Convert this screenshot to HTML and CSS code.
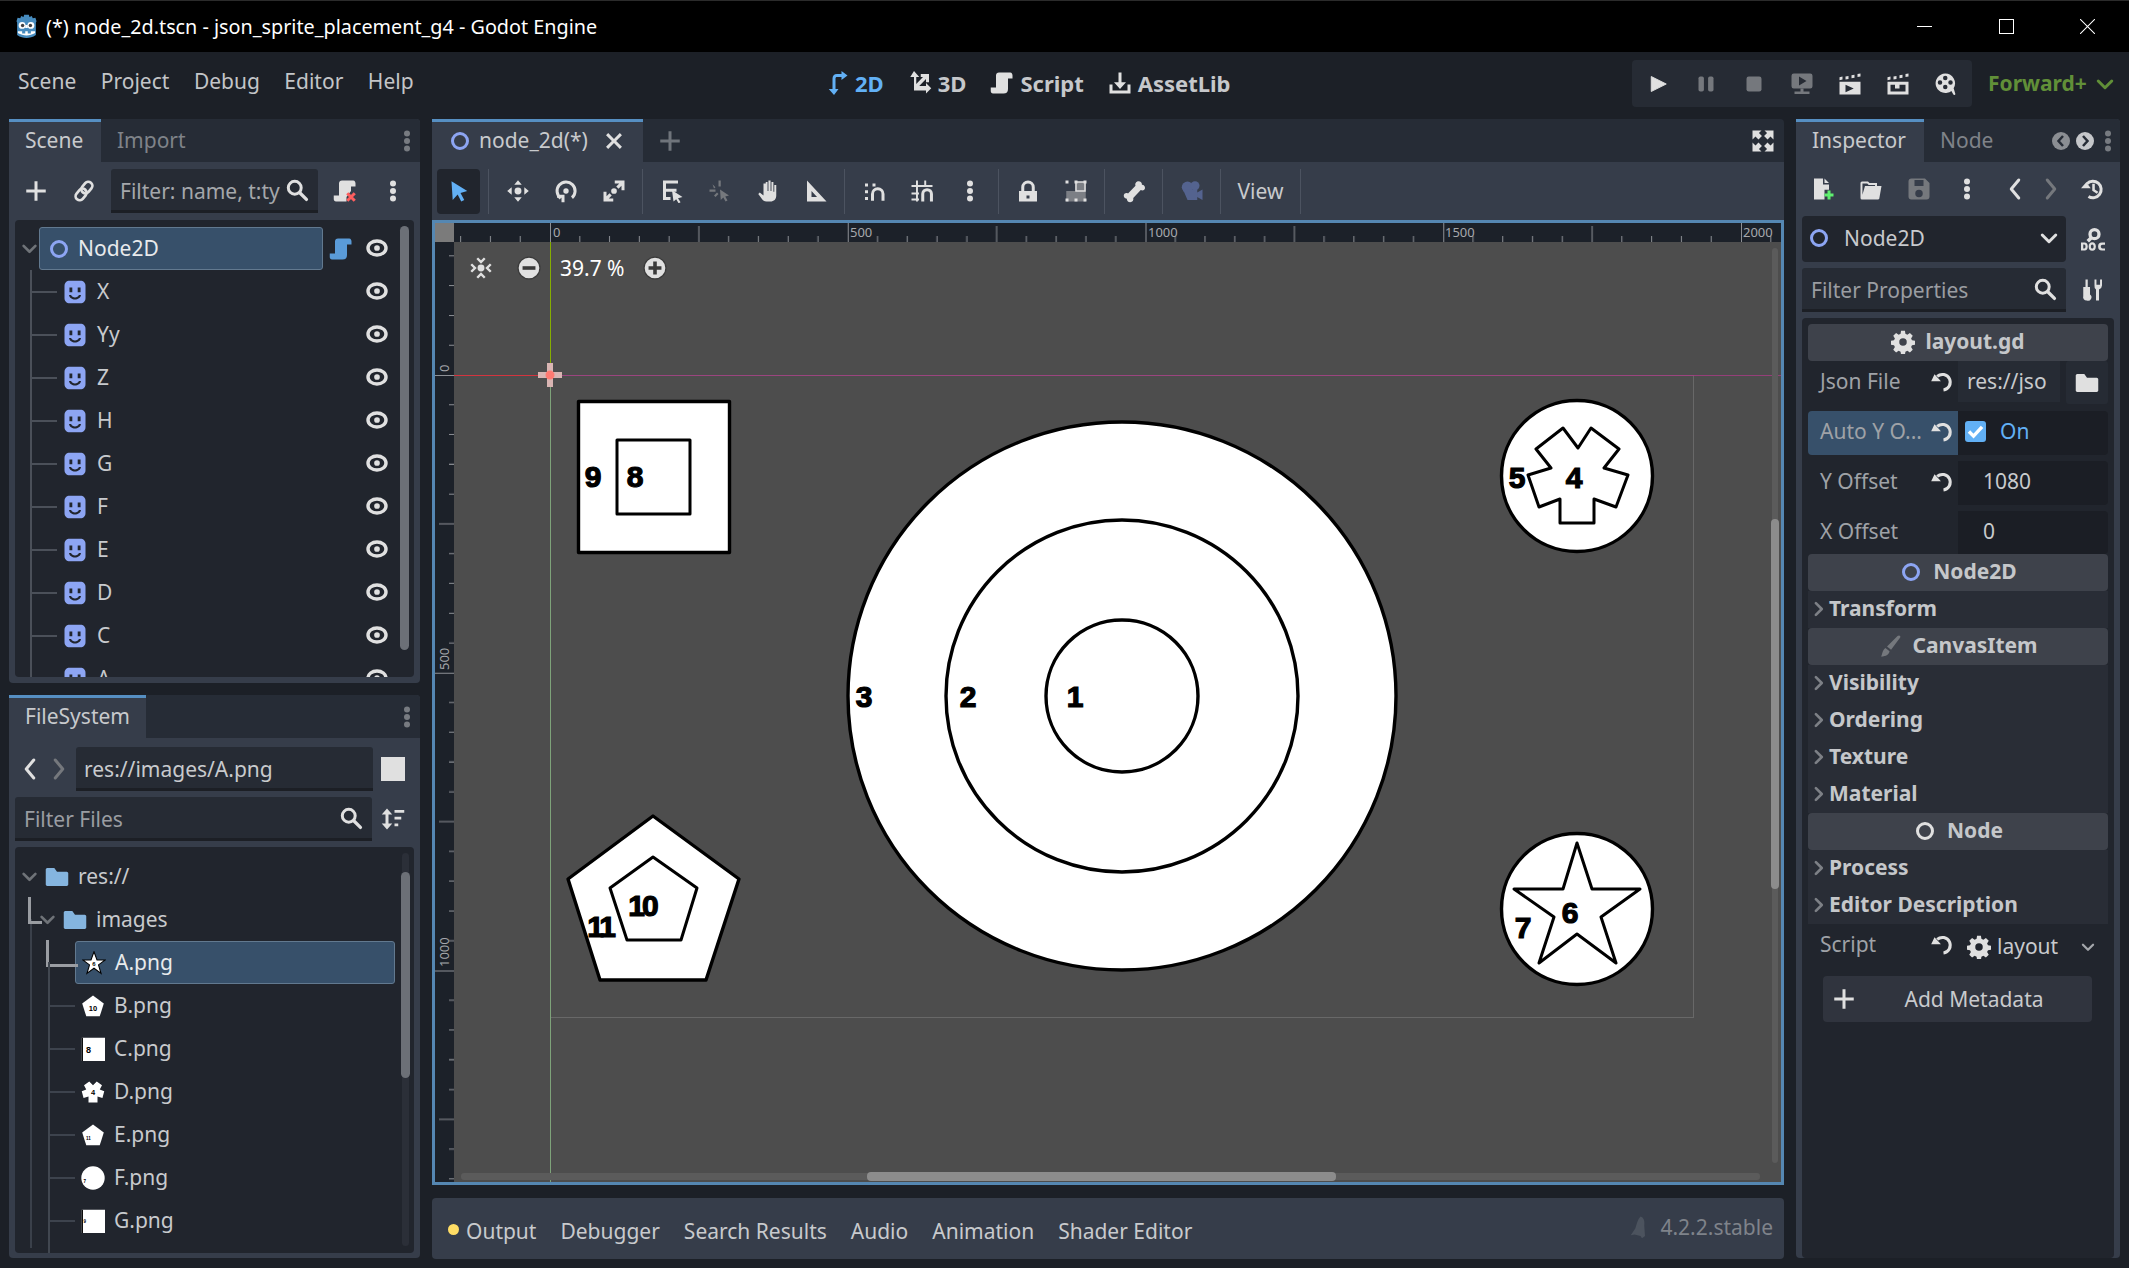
FILE: index.html
```html
<!DOCTYPE html>
<html lang="en">
<head>
  <meta charset="UTF-8">
  <title>(*) node_2d.tscn - json_sprite_placement_g4 - Godot Engine</title>
  <link rel="stylesheet" href="styles.css">
</head>
<body>
  <!-- icon sheet -->
  <svg class="defs">
    <symbol id="i-eye" viewBox="0 0 16 16"><ellipse cx="8" cy="8" rx="6" ry="4.700" fill="none" stroke="currentColor" stroke-width="2.300"/><circle cx="8" cy="8" r="1.900"/></symbol>
    <symbol id="i-node" viewBox="0 0 16 16"><circle cx="8" cy="8" r="5" fill="none" stroke="currentColor" stroke-width="2"/></symbol>
    <symbol id="i-sprite" viewBox="0 0 16 16"><path fill="#8da5f3" d="M4.500 .5h7c2.200 0 3.500 1.300 3.500 3.500v8c0 2.200-1.300 3.500-3.500 3.500h-7C2.300 15.500 1 14.200 1 12V4C1 1.800 2.300.5 4.500.5z"/><path fill="#21252d" d="M4.300 5h1.900v3.200H4.300zM9.800 5h1.900v3.200H9.800zM4 10h1.400c.3 1 1.500 1.600 2.600 1.600s2.300-.6 2.600-1.600H12c-.3 1.900-2.100 3-4 3s-3.700-1.100-4-3z"/></symbol>
    <symbol id="i-down" viewBox="0 0 16 16"><path fill="none" stroke="currentColor" stroke-width="2" stroke-linecap="round" stroke-linejoin="round" d="M3.500 6 8 10.500 12.500 6"/></symbol>
    <symbol id="i-right" viewBox="0 0 16 16"><path fill="none" stroke="currentColor" stroke-width="2" stroke-linecap="round" stroke-linejoin="round" d="M6 3.500 10.500 8 6 12.500"/></symbol>
    <symbol id="i-search" viewBox="0 0 16 16"><circle cx="6.500" cy="6.500" r="4.300" fill="none" stroke="currentColor" stroke-width="2"/><path stroke="currentColor" stroke-width="2.200" stroke-linecap="round" d="m10 10 4.300 4.300"/></symbol>
    <symbol id="i-dots" viewBox="0 0 16 16"><circle cx="8" cy="3" r="2"/><circle cx="8" cy="8" r="2"/><circle cx="8" cy="13" r="2"/></symbol>
    <symbol id="i-plus" viewBox="0 0 16 16"><path d="M7 1.500h2V7h5.500v2H9v5.500H7V9H1.500V7H7z"/></symbol>
    <symbol id="i-link" viewBox="0 0 16 16"><g transform="rotate(-50 8 8)" fill="none" stroke="currentColor" stroke-width="1.800"><rect x=".8" y="5.300" width="8.400" height="5.400" rx="2.700"/><rect x="6.800" y="5.300" width="8.400" height="5.400" rx="2.700"/></g></symbol>
    <symbol id="i-script" viewBox="0 0 16 16"><path d="M6 1h7.500c1 0 1.500 1 1.500 2v2h-3v7c0 2-1 3-3 3H2c-1 0-1.500-.7-1.500-1.700V11H4V3c0-1.200.8-2 2-2z"/></symbol>
    <symbol id="i-scriptx" viewBox="0 0 16 16"><path fill="#e0e0e0" d="M6 1h7.500c1 0 1.500 1 1.500 2v2h-3v3L9 12v3H2c-1 0-1.500-.7-1.500-1.700V11H4V3c0-1.200.8-2 2-2z"/><path stroke="#ff5f5f" stroke-width="2" d="m9.500 9.500 5 5m0-5-5 5"/></symbol>
    <symbol id="i-select" viewBox="0 0 16 16"><path d="M3 1.500 13.500 8 9 9.300l2.500 4.700-2 1-2.400-4.700L3.800 14z"/></symbol>
    <symbol id="i-move" viewBox="0 0 16 16"><circle cx="8" cy="8" r="2.300"/><path d="M8 .8 10.500 3.800H5.500zM8 15.200 5.500 12.200h5zM.8 8 3.800 5.500v5zM15.200 8 12.200 10.500v-5z"/></symbol>
    <symbol id="i-rotate" viewBox="0 0 16 16"><circle cx="8" cy="8" r="1.800"/><path fill="none" stroke="currentColor" stroke-width="2" d="M4.500 12.800a6 6 0 1 1 7.500-.3"/><path d="M2 10.500h5v5H5v-3H2z"/></symbol>
    <symbol id="i-scale" viewBox="0 0 16 16"><circle cx="8" cy="8" r="1.900"/><path d="M8.500 1H15v6.500h-2V4.500l-2 2L9.500 5l2-2h-3zM1 8.500h2v3l2-2L6.500 11l-2 2h3v2H1z"/></symbol>
    <symbol id="i-list" viewBox="0 0 16 16"><path d="M2 1h10v2H4v3.500h7v2H4V12h3v2H2z"/><path d="M8 7.500 15 12l-3 .8 1.700 2.700-1.300.7-1.600-2.700L9 15z"/></symbol>
    <symbol id="i-smart" viewBox="0 0 16 16"><path d="M7 1h1.500v4H7zM1 7h4v1.500H1zM3 3.500 5 5.500l-1 .8zM5 12l-1-1 2-2 1 1z"/><path d="M8 7 14 11l-2.500.6L13 14.300l-1.300.7-1.500-2.700L8.500 14z"/></symbol>
    <symbol id="i-hand" viewBox="0 0 16 16"><path d="M6.500 2h1.200v6h.6V1h1.400v7h.6V2h1.300v6.500h.6V4h1.300v7c0 2.500-1.500 4-4 4H7c-2 0-2.500-1-3.500-2.300L1.500 10l1-1 2.500 2V3h1.500z"/></symbol>
    <symbol id="i-ruler" viewBox="0 0 16 16"><path fill-rule="evenodd" d="M2 1 15 15H2zM5 8v4h3.700z"/></symbol>
    <symbol id="i-snap" viewBox="0 0 16 16"><path d="M2 3h2v2H2zM7 3h2v2H7zM2 7.500h2v2H2zM2 12h2v2H2z"/><path fill="none" stroke="currentColor" stroke-width="2" d="M7 14.500V10a3.500 3.500 0 0 1 7 0v4.500"/></symbol>
    <symbol id="i-grid" viewBox="0 0 16 16"><path d="M4 1h1.300v14H4zM9.500 1h1.300v4H9.500zM1 4h14v1.300H1zM1 9h5v1.300H1zM1 13h5v1.300H1z"/><path fill="none" stroke="currentColor" stroke-width="2" d="M8.500 15v-5a2.900 2.900 0 0 1 5.800 0v5"/></symbol>
    <symbol id="i-lock" viewBox="0 0 16 16"><path fill-rule="evenodd" d="M8 1a4.500 4.500 0 0 1 4.500 4.500V8H14v7H2V8h1.500V5.500A4.500 4.500 0 0 1 8 1zm0 2a2.500 2.500 0 0 0-2.500 2.500V8h5V5.500A2.500 2.500 0 0 0 8 3zm-1 8v2h2v-2z"/></symbol>
    <symbol id="i-group" viewBox="0 0 16 16"><path fill="#7c7f85" d="M1.500 8h6V2h7v13h-13z"/><path fill="none" stroke="#e0e0e0" stroke-width="1" d="M8 2h6v6H8z"/><path fill="#e0e0e0" d="M1 1h2v2H1zM7 1h2v2H7zM13 1h2v2h-2zM13 13h2v2h-2zM7 13h2v2H7zM1 13h2v2H1z"/></symbol>
    <symbol id="i-bone" viewBox="0 0 16 16"><path d="M11 1.500c1.500 0 2.300 1 2.300 2.300 1.500 0 2.200 1.200 2 2.500-.3 1.200-1.700 1.700-2.800 1L7.500 12.700c.4 1.400-.5 2.800-2 2.800s-2.300-1-2.300-2.300C1.700 13 1 12 1.200 10.700c.3-1.200 1.700-1.700 2.800-1L9 4.500c-.5-1.500.5-3 2-3z"/></symbol>
    <symbol id="i-cam" viewBox="0 0 16 16"><circle cx="5" cy="5.500" r="3.800"/><circle cx="10" cy="4.500" r="3"/><path d="M2 7h9.500v7H5zM11.500 9l3.500-2v7l-3.500-2z"/></symbol>
    <symbol id="i-expand" viewBox="0 0 16 16"><path d="M1 1h6L5.300 2.700l2 2L5 7 3 5 1 7zM15 1H9l1.700 1.700-2 2L11 7l2-2 2 2zM1 15h6l-1.700-1.700 2-2L5 9l-2 2-2-2zM15 15H9l1.700-1.700-2-2L11 9l2 2 2-2z"/></symbol>
    <symbol id="i-fit" viewBox="0 0 16 16"><circle cx="8" cy="8" r="2.300"/><path fill="none" stroke="currentColor" stroke-width="1.600" d="M5.500 1.500 8 4l2.500-2.500M5.500 14.500 8 12l2.500 2.500M1.500 5.500 4 8l-2.500 2.500M14.500 5.500 12 8l2.500 2.500"/></symbol>
    <symbol id="i-minus" viewBox="0 0 16 16"><circle cx="8" cy="8" r="7.300" fill="#e0e0e0" stroke="#3a3a3a" stroke-width=".8"/><path fill="#3a3a3a" d="M3.700 6.800h8.600v2.400H3.700z"/></symbol>
    <symbol id="i-zplus" viewBox="0 0 16 16"><circle cx="8" cy="8" r="7.300" fill="#e0e0e0" stroke="#3a3a3a" stroke-width=".8"/><path fill="#3a3a3a" d="M6.800 3.700h2.400v3.100h3.100v2.400H9.200v3.100H6.800V9.200H3.700V6.800h3.100z"/></symbol>
    <symbol id="i-2d" viewBox="0 0 16 16"><path d="M5 5c0-1.700 1-3 3-3h3V0l4 3-4 3V4H8c-.7 0-1 .4-1 1v7h2l-3 4-3.500-4H5z"/></symbol>
    <symbol id="i-3d" viewBox="0 0 16 16"><path d="M4 0 7.500 4H5.500v4.700L10 4H8.500V2H14v5.500h-2V5.400L7.500 10H12V8l3.500 3.500L12 15v-2H4V4H1.500z"/></symbol>
    <symbol id="i-asset" viewBox="0 0 16 16"><path d="M7 1h2v6.500h3L8 12 4 7.500h3z"/><path d="M1 9h2v4h10V9h2v6H1z"/></symbol>
    <symbol id="i-play" viewBox="0 0 16 16"><path d="M3.500 3 13.500 8 3.500 13z" stroke="currentColor" stroke-linejoin="round" stroke-width=".6"/></symbol>
    <symbol id="i-pause" viewBox="0 0 16 16"><rect x="3" y="3" width="3.600" height="10" rx="1.200"/><rect x="9.400" y="3" width="3.600" height="10" rx="1.200"/></symbol>
    <symbol id="i-stop" viewBox="0 0 16 16"><rect x="3" y="3" width="10" height="10" rx="1.500"/></symbol>
    <symbol id="i-remote" viewBox="0 0 16 16"><path fill-rule="evenodd" d="M2.500 1h11A1.500 1.500 0 0 1 15 2.500v7a1.500 1.500 0 0 1-1.500 1.500H2.500A1.500 1.500 0 0 1 1 9.500v-7A1.500 1.500 0 0 1 2.500 1zM6 3v6l5-3z"/><path d="M7 11h2v2h4v1.700H3V13h4z"/></symbol>
    <symbol id="i-clap" viewBox="0 0 16 16"><path d="M1 3.500 3 3v2l-2 .5zM5 3l2-.4v2L5 5zM9 2.200l2-.4v2l-2 .4zM13 1.400l2-.4v2l-2 .4z"/><path fill-rule="evenodd" d="M1 6.500h14V15H1zM5 8.500v5l5.500-2.500z"/></symbol>
    <symbol id="i-clap2" viewBox="0 0 16 16"><path d="M1 3.500 3 3v2l-2 .5zM5 3l2-.4v2L5 5zM9 2.200l2-.4v2l-2 .4zM13 1.400l2-.4v2l-2 .4z"/><path fill-rule="evenodd" d="M1 6.500h14V15H1zM3 8.500v4.500h10V8.500H9v2.500H6V8.500z"/></symbol>
    <symbol id="i-reel" viewBox="0 0 16 16"><path fill-rule="evenodd" d="M7.500 1a6.500 6.500 0 0 1 5.600 9.800l1.100 3.700c.2.700-1 1.200-1.400.4L11.600 12.600A6.500 6.500 0 1 1 7.500 1zm0 1.500a1.500 1.500 0 1 0 0 3 1.500 1.500 0 0 0 0-3zm-3.500 3a1.500 1.500 0 1 0 0 3 1.500 1.500 0 0 0 0-3zm7 0a1.500 1.500 0 1 0 0 3 1.500 1.500 0 0 0 0-3zm-3.500 3a1.500 1.500 0 1 0 0 3 1.500 1.500 0 0 0 0-3z"/></symbol>
    <symbol id="i-new" viewBox="0 0 16 16"><path fill="#e0e0e0" d="M2 1h6v4h4v3.500H9V15H2zM9 1l3 3H9z"/><path fill="#5fef6f" d="M11 9h2v2h2v2h-2v2h-2v-2H9v-2h2z"/></symbol>
    <symbol id="i-open" viewBox="0 0 16 16"><path fill-rule="evenodd" d="M2 3h4l1 1h5v2h3l-1.500 8.500a1 1 0 0 1-1 .5H2a1 1 0 0 1-1-1V4a1 1 0 0 1 1-1zm.3 1.300v7.500L4 6h6.700V5.300H6.500l-1-1z"/></symbol>
    <symbol id="i-save" viewBox="0 0 16 16"><path fill-rule="evenodd" d="M3 1h9l3 3v9a2 2 0 0 1-2 2H3a2 2 0 0 1-2-2V3a2 2 0 0 1 2-2zm2 1v4h6V2zm3 6.500a2.500 2.500 0 1 0 0 5 2.500 2.500 0 0 0 0-5z"/></symbol>
    <symbol id="i-back" viewBox="0 0 16 16"><path fill="none" stroke="currentColor" stroke-width="2" stroke-linecap="round" stroke-linejoin="round" d="M10.500 2 5.500 8l5 6"/></symbol>
    <symbol id="i-fwd" viewBox="0 0 16 16"><path fill="none" stroke="currentColor" stroke-width="2" stroke-linecap="round" stroke-linejoin="round" d="M5.500 2 10.500 8l-5 6"/></symbol>
    <symbol id="i-history" viewBox="0 0 16 16"><path fill="none" stroke="currentColor" stroke-width="2" d="M4 4.500A5.500 5.500 0 1 1 5 13"/><path d="M0 7.500h6.500L3.500 3.500zM7.500 4.500h1.700v3.800l2.300 1.500-.9 1.300-3.100-2z"/></symbol>
    <symbol id="i-doc" viewBox="0 0 16 16"><circle cx="9" cy="4.800" r="3" fill="none" stroke="currentColor" stroke-width="2.200"/><path stroke="currentColor" stroke-width="2.400" d="M7 7 4.500 9.500"/><path fill-rule="evenodd" d="M0 10.300h2.500c1.200 0 2 .9 2 2.700s-.8 2.700-2 2.700H0zM1.500 11.700v2.600h.7c.5 0 .8-.5.8-1.300s-.3-1.300-.8-1.300zM7.500 10.100c1.600 0 2.400 1.100 2.400 2.900s-.8 2.900-2.400 2.900-2.400-1.100-2.400-2.900.8-2.900 2.400-2.900zm0 1.500c-.6 0-.9.500-.9 1.400s.3 1.400.9 1.400.9-.5.9-1.400-.3-1.400-.9-1.400zM16 11.800h-1.600c-.8 0-1.200.5-1.200 1.200s.4 1.300 1.200 1.300H16v1.400h-2c-1.800 0-2.600-1.100-2.600-2.700s.8-2.600 2.600-2.600h2z"/></symbol>
    <symbol id="i-tools" viewBox="0 0 16 16"><path d="M3 1h1.500v5H6v5a2.300 2.300 0 0 1-2.200 4A2.300 2.300 0 0 1 1.500 12V6H3z"/><path d="M9 1h1.300v3.500h2.400V1H14v4a3 3 0 0 1-2 2.700V15h-2V7.700A3 3 0 0 1 9 5z"/></symbol>
    <symbol id="i-sort" viewBox="0 0 16 16"><path d="M4 1 7.500 5H5v6h2.500L4 15 .5 11H3V5H.5z"/><path d="M9 2h6.500v1.800H9zM9 6.500h4.500v1.800H9zM9 11h2.500v1.800H9z"/></symbol>
    <symbol id="i-folder" viewBox="0 0 16 16"><path d="M1.500 2h4.700l1.800 2.500h6.500c.5 0 1 .5 1 1V13c0 .5-.5 1-1 1h-13c-.5 0-1-.5-1-1V3c0-.5.5-1 1-1z"/></symbol>
    <symbol id="i-gear" viewBox="0 0 16 16"><path fill-rule="evenodd" d="M6.700 1h2.600l.3 2 1.300.6 1.700-1.100 1.900 1.900-1.100 1.700.6 1.300 2 .3v2.600l-2 .3-.6 1.300 1.100 1.700-1.900 1.900-1.700-1.100-1.300.6-.3 2H6.700l-.3-2-1.300-.6-1.700 1.100-1.900-1.900 1.100-1.700-.6-1.300-2-.3V7.700l2-.3.6-1.300-1.100-1.700 1.900-1.900 1.700 1.100 1.300-.6zM8 6a2.500 2.500 0 1 0 0 5 2.500 2.500 0 0 0 0-5z" transform="translate(0 -.5)"/></symbol>
    <symbol id="i-reset" viewBox="0 0 16 16"><path fill="none" stroke="currentColor" stroke-width="2" d="M4.800 4.300A5.200 5.200 0 1 1 9 13.300"/><path d="M.8 7.500h6.500L3 2.800z"/></symbol>
    <symbol id="i-brush" viewBox="0 0 16 16"><path d="M14 1c.7 0 1.200.7.800 1.300L8.700 10.500 6 8.300 13 1.300zM5 9.300l2.700 2.200C7.500 13.500 5.500 15 2 15c1-1 .5-4 3-5.700z"/></symbol>
    <symbol id="i-mini" viewBox="0 0 16 16"><path d="M9 1c2 .5 3 3 2.500 6l.5 7-2 1.500-1-1.500-4-1-2.500.5 3-4.500C6.500 6 7 3 9 1z"/></symbol>
    <symbol id="i-logo" viewBox="0 0 16 16"><path fill="#478cbf" d="M2.300 2.400 4 2.700l.6-1.500 1.500.7.400-1.500h3l.4 1.500 1.500-.7.600 1.500 1.700-.3.700 2.300-.4.700v8c-2 1.500-4 1.900-6 1.900s-4-.4-6-1.900v-8l-.4-.7z"/><circle cx="5.200" cy="7.300" r="2.200" fill="#fff"/><circle cx="10.800" cy="7.300" r="2.200" fill="#fff"/><circle cx="5.500" cy="7.400" r="1.100" fill="#414042"/><circle cx="10.500" cy="7.400" r="1.100" fill="#414042"/><path fill="#fff" d="M7.200 7h1.600v2H7.200zM2.500 11h2.700v1.500h2V11h1.600v1.500h2V11h2.700v1.200c-3.500 2-7.500 2-11 0z"/></symbol>
    <symbol id="t-star" viewBox="0 0 16 16"><path fill="#fff" stroke="#000" stroke-width=".7" d="M8 .5 10 6h5.500l-4.500 3.300L12.700 15 8 11.500 3.300 15 5 9.300.5 6H6z"/></symbol>
    <symbol id="t-pent" viewBox="0 0 16 16"><path fill="#fff" d="M8 1 15.200 6.300 12.500 14.800H3.500L.8 6.300z"/></symbol>
    <symbol id="t-square" viewBox="0 0 16 16"><path fill="#fff" d="M.5.500h15.500v15.500H.5z"/><path fill="#000" d="M.5.500h.8v15.500H.5z"/></symbol>
    <symbol id="t-flower" viewBox="0 0 16 16"><path fill="#fff" d="M5.500 1 8 3.500 10.500 1 14 3.500 12.500 6.300 15.500 7.500 14.300 12 11 11v4H5v-4l-3.300 1L.5 7.500l3-1.200L2 3.500z"/></symbol>
    <symbol id="t-circle" viewBox="0 0 16 16"><circle cx="8" cy="8" r="7.800" fill="#fff"/></symbol>
  </svg>

  <header class="titlebar">
    <svg class="ic logo"><use href="#i-logo"/></svg>
    <span class="window-title">(*) node_2d.tscn - json_sprite_placement_g4 - Godot Engine</span>
    <div class="window-btns">
      <span class="win-min"></span>
      <span class="win-max"></span>
      <svg class="win-close" viewBox="0 0 16 16"><path stroke="#fff" stroke-width="1.100" d="m0 0 16 16M16 0 0 16"/></svg>
    </div>
  </header>

  <nav class="menubar">
    <div class="menus">
      <span>Scene</span><span>Project</span><span>Debug</span><span>Editor</span><span>Help</span>
    </div>
    <div class="workspaces">
      <span class="ws ws-on"><svg class="ic"><use href="#i-2d"/></svg>2D</span>
      <span class="ws"><svg class="ic"><use href="#i-3d"/></svg>3D</span>
      <span class="ws"><svg class="ic"><use href="#i-script"/></svg>Script</span>
      <span class="ws"><svg class="ic"><use href="#i-asset"/></svg>AssetLib</span>
    </div>
    <div class="runbar">
      <svg class="ic"><use href="#i-play"/></svg>
      <svg class="ic dim"><use href="#i-pause"/></svg>
      <svg class="ic dim"><use href="#i-stop"/></svg>
      <svg class="ic dim"><use href="#i-remote"/></svg>
      <svg class="ic"><use href="#i-clap"/></svg>
      <svg class="ic"><use href="#i-clap2"/></svg>
      <svg class="ic"><use href="#i-reel"/></svg>
    </div>
    <div class="renderer">Forward+<svg class="ic"><use href="#i-down"/></svg></div>
  </nav>

  <main class="main">
    <!-- left docks -->
    <div class="dock-left">
      <section class="panel scene-panel">
        <div class="tabs">
          <span class="tab on">Scene</span><span class="tab">Import</span>
          <svg class="ic tab-dots"><use href="#i-dots"/></svg>
        </div>
        <div class="scene-tools">
          <svg class="ic"><use href="#i-plus"/></svg>
          <svg class="ic"><use href="#i-link"/></svg>
          <div class="lineedit filter-scene"><span class="clip">Filter: name, t:ty</span><svg class="ic"><use href="#i-search"/></svg></div>
          <svg class="ic"><use href="#i-scriptx"/></svg>
          <svg class="ic"><use href="#i-dots"/></svg>
        </div>
        <div class="tree scene-tree">
          <div class="row root"><svg class="ic chev"><use href="#i-down"/></svg><div class="sel sel-root"><svg class="ic blue"><use href="#i-node"/></svg>Node2D</div><svg class="ic attached"><use href="#i-script"/></svg><svg class="ic eye"><use href="#i-eye"/></svg></div>
          <div class="row leaf"><svg class="ic"><use href="#i-sprite"/></svg><span>X</span><svg class="ic eye"><use href="#i-eye"/></svg></div>
          <div class="row leaf"><svg class="ic"><use href="#i-sprite"/></svg><span>Yy</span><svg class="ic eye"><use href="#i-eye"/></svg></div>
          <div class="row leaf"><svg class="ic"><use href="#i-sprite"/></svg><span>Z</span><svg class="ic eye"><use href="#i-eye"/></svg></div>
          <div class="row leaf"><svg class="ic"><use href="#i-sprite"/></svg><span>H</span><svg class="ic eye"><use href="#i-eye"/></svg></div>
          <div class="row leaf"><svg class="ic"><use href="#i-sprite"/></svg><span>G</span><svg class="ic eye"><use href="#i-eye"/></svg></div>
          <div class="row leaf"><svg class="ic"><use href="#i-sprite"/></svg><span>F</span><svg class="ic eye"><use href="#i-eye"/></svg></div>
          <div class="row leaf"><svg class="ic"><use href="#i-sprite"/></svg><span>E</span><svg class="ic eye"><use href="#i-eye"/></svg></div>
          <div class="row leaf"><svg class="ic"><use href="#i-sprite"/></svg><span>D</span><svg class="ic eye"><use href="#i-eye"/></svg></div>
          <div class="row leaf"><svg class="ic"><use href="#i-sprite"/></svg><span>C</span><svg class="ic eye"><use href="#i-eye"/></svg></div>
          <div class="row leaf"><svg class="ic"><use href="#i-sprite"/></svg><span>A</span><svg class="ic eye"><use href="#i-eye"/></svg></div>
          <div class="thumb scene-thumb"></div>
        </div>
      </section>

      <section class="panel fs-panel">
        <div class="tabs">
          <span class="tab on">FileSystem</span>
          <svg class="ic tab-dots"><use href="#i-dots"/></svg>
        </div>
        <div class="fs-path">
          <svg class="ic"><use href="#i-back"/></svg>
          <svg class="ic dim"><use href="#i-fwd"/></svg>
          <div class="lineedit path-edit">res://images/A.png</div>
          <span class="swatch"></span>
        </div>
        <div class="fs-filter">
          <div class="lineedit filter-files"><span class="clip hint">Filter Files</span><svg class="ic"><use href="#i-search"/></svg></div>
          <svg class="ic"><use href="#i-sort"/></svg>
        </div>
        <div class="tree fs-tree">
          <div class="row fs-res"><svg class="ic chev"><use href="#i-down"/></svg><svg class="ic folder"><use href="#i-folder"/></svg><span>res://</span></div>
          <div class="row fs-dir"><svg class="ic chev"><use href="#i-down"/></svg><svg class="ic folder"><use href="#i-folder"/></svg><span>images</span></div>
          <div class="row file first-file"><div class="sel sel-file"><svg class="ic" viewBox="0 0 16 16"><use href="#t-star"/><text class="tn" x="8" y="10" font-size="4">6</text></svg>A.png</div></div>
          <div class="row file"><svg class="ic" viewBox="0 0 16 16"><use href="#t-pent"/><text class="tn" x="8" y="11" font-size="5">10</text></svg><span>B.png</span></div>
          <div class="row file"><svg class="ic" viewBox="0 0 16 16"><use href="#t-square"/><text class="tn" x="5" y="10.500" font-size="6">8</text></svg><span>C.png</span></div>
          <div class="row file"><svg class="ic" viewBox="0 0 16 16"><use href="#t-flower"/><text class="tn" x="8" y="10" font-size="5">4</text></svg><span>D.png</span></div>
          <div class="row file"><svg class="ic" viewBox="0 0 16 16"><use href="#t-pent"/><text class="tn" x="5" y="11" font-size="3">11</text></svg><span>E.png</span></div>
          <div class="row file"><svg class="ic" viewBox="0 0 16 16"><use href="#t-circle"/><text class="tn" x="2.500" y="11" font-size="3">7</text></svg><span>F.png</span></div>
          <div class="row file"><svg class="ic" viewBox="0 0 16 16"><use href="#t-square"/><text class="tn" x="2.500" y="9.500" font-size="3">9</text></svg><span>G.png</span></div>
          <div class="fs-track"></div>
          <div class="thumb fs-thumb"></div>
        </div>
      </section>
    </div>

    <!-- centre -->
    <div class="center">
      <div class="tabs center-tabs">
        <span class="tab on scene-tab"><svg class="ic blue"><use href="#i-node"/></svg>node_2d(*)<svg class="ic close"><use href="#i-plus"/></svg></span>
        <svg class="ic add-tab"><use href="#i-plus"/></svg>
        <svg class="ic full"><use href="#i-expand"/></svg>
      </div>
      <div class="toolbar">
        <span class="tool tool-on"><svg class="ic"><use href="#i-select"/></svg></span>
        <i class="sep"></i>
        <span class="tool"><svg class="ic"><use href="#i-move"/></svg></span>
        <span class="tool"><svg class="ic"><use href="#i-rotate"/></svg></span>
        <span class="tool"><svg class="ic"><use href="#i-scale"/></svg></span>
        <i class="sep"></i>
        <span class="tool"><svg class="ic"><use href="#i-list"/></svg></span>
        <span class="tool dim"><svg class="ic"><use href="#i-smart"/></svg></span>
        <span class="tool"><svg class="ic"><use href="#i-hand"/></svg></span>
        <span class="tool"><svg class="ic"><use href="#i-ruler"/></svg></span>
        <i class="sep"></i>
        <span class="tool"><svg class="ic"><use href="#i-snap"/></svg></span>
        <span class="tool"><svg class="ic"><use href="#i-grid"/></svg></span>
        <span class="tool"><svg class="ic"><use href="#i-dots"/></svg></span>
        <i class="sep"></i>
        <span class="tool"><svg class="ic"><use href="#i-lock"/></svg></span>
        <span class="tool"><svg class="ic"><use href="#i-group"/></svg></span>
        <i class="sep"></i>
        <span class="tool"><svg class="ic"><use href="#i-bone"/></svg></span>
        <i class="sep"></i>
        <span class="tool cam"><svg class="ic"><use href="#i-cam"/></svg></span>
        <i class="sep"></i>
        <span class="tool view">View</span>
        <i class="sep"></i>
      </div>

      <div class="viewport">
        <svg class="canvas" width="1352" height="965" viewBox="432 220 1352 965">
          <defs>
            <pattern id="ticks-x" patternUnits="userSpaceOnUse" x="550" y="223" width="297.750" height="19">
              <path class="tick" d="M.5 0v19M29.800 13v6M59.500 13v6M89.300 13v6M119.100 13v6M148.900 3v16M178.600 13v6M208.400 13v6M238.200 13v6M268 13v6"/>
            </pattern>
            <pattern id="ticks-y" patternUnits="userSpaceOnUse" x="435" y="375" width="19" height="297.750">
              <path class="tick" d="M0 .5h19M14 29.800h5M14 59.500h5M14 89.300h5M14 119.100h5M4 148.900h15M14 178.600h5M14 208.400h5M14 238.200h5M14 268h5"/>
            </pattern>
          </defs>
          <rect class="scene-frame" x="550.500" y="375.500" width="1143" height="642"/>
          <path class="axis-y-top" d="M550.500 242v133"/>
          <path class="axis-y" d="M550.500 375v810"/>
          <path class="axis-x-left" d="M454 375.500h96"/>
          <path class="axis-x" d="M550 375.500h1231"/>

          <!-- rings -->
          <circle class="shape" cx="1122" cy="696" r="274"/>
          <circle class="shape" cx="1122" cy="696" r="176"/>
          <circle class="shape" cx="1122" cy="696" r="76"/>
          <text class="digit" x="864" y="707">3</text>
          <text class="digit" x="968" y="707">2</text>
          <text class="digit" x="1075" y="707">1</text>

          <!-- squares -->
          <rect class="shape" x="578.500" y="401.500" width="151" height="151"/>
          <rect class="shape thin" x="617" y="440" width="73" height="74"/>
          <text class="digit" x="593" y="487">9</text>
          <text class="digit" x="635" y="487">8</text>

          <!-- pentagons -->
          <polygon class="shape" points="653,816 739,879 706,980 600,980 568,879"/>
          <polygon class="shape thin" points="653,857 697,888 681,940 627,940 610,888"/>
          <text class="digit tight" x="642" y="916">10</text>
          <text class="digit tight" x="600" y="937">11</text>

          <!-- flower in circle -->
          <circle class="shape" cx="1577" cy="476" r="75.500"/>
          <polygon class="shape thin" points="1563,428 1578,448 1591,428 1619,449 1604,468 1628,475 1616,507 1594,499 1594,523 1560,523 1560,499 1539,507 1528,475 1551,468 1536,449"/>
          <text class="digit" x="1517" y="488">5</text>
          <text class="digit" x="1574" y="488">4</text>

          <!-- star in circle -->
          <circle class="shape" cx="1577" cy="909" r="75.500"/>
          <polygon class="shape thin" points="1577,843 1592,889 1640,889 1601,917 1616,963 1577,934 1539,963 1554,917 1514,889 1563,889"/>
          <text class="digit" x="1570" y="923">6</text>
          <text class="digit" x="1523" y="938">7</text>

          <!-- origin -->
          <path class="origin-back" d="M547 363h6v9h9v6h-9v9h-6v-9h-9v-6h9z"/>
          <circle class="origin-dot" cx="550" cy="375" r="4.500"/>

          <!-- rulers -->
          <rect class="ruler" x="435" y="223" width="1346" height="19"/>
          <rect class="ruler" x="435" y="223" width="19" height="959"/>
          <rect fill="url(#ticks-x)" x="454" y="223" width="1327" height="19"/>
          <rect fill="url(#ticks-y)" x="435" y="242" width="19" height="940"/>
          <rect class="ruler-corner" x="435" y="223" width="19" height="19"/>
          <text class="ruler-num" x="553" y="237">0</text>
          <text class="ruler-num" x="850" y="237">500</text>
          <text class="ruler-num" x="1148" y="237">1000</text>
          <text class="ruler-num" x="1445" y="237">1500</text>
          <text class="ruler-num" x="1743" y="237">2000</text>
          <text class="ruler-num" transform="translate(449 372) rotate(-90)">0</text>
          <text class="ruler-num" transform="translate(449 670) rotate(-90)">500</text>
          <text class="ruler-num" transform="translate(449 967) rotate(-90)">1000</text>

          <!-- scrollbars -->
          <rect class="bar-track" x="461" y="1173" width="1299" height="7" rx="3"/>
          <rect class="bar-grab" x="867" y="1172" width="469" height="9" rx="4"/>
          <rect class="bar-track" x="1772" y="248" width="6" height="915" rx="3"/>
          <rect class="bar-grab" x="1771" y="519" width="8" height="370" rx="4"/>
        </svg>
        <div class="zoom">
          <svg class="ic fit"><use href="#i-fit"/></svg>
          <svg class="ic zbtn"><use href="#i-minus"/></svg>
          <span class="zoom-val">39.7 %</span>
          <svg class="ic zbtn"><use href="#i-zplus"/></svg>
        </div>
      </div>

      <div class="bottom">
        <i class="warn-dot"></i>
        <span>Output</span><span>Debugger</span><span>Search Results</span><span>Audio</span><span>Animation</span><span>Shader Editor</span>
        <div class="version"><svg class="ic mini"><use href="#i-mini"/></svg>4.2.2.stable</div>
      </div>
    </div>

    <!-- inspector -->
    <section class="panel dock-right">
      <div class="tabs">
        <span class="tab on insp-tab">Inspector</span><span class="tab">Node</span>
        <svg class="tiny arrows" viewBox="0 0 44 20"><circle cx="9" cy="10" r="9" fill="#8b8e93"/><circle cx="33" cy="10" r="9" fill="#c5c7ca"/><path fill="none" stroke="#262c36" stroke-width="2.500" d="M11 5 6.500 10l4.500 5M31 5l4.500 5-4.500 5"/></svg>
        <svg class="ic tab-dots right-dots"><use href="#i-dots"/></svg>
      </div>
      <div class="insp-tools">
        <svg class="ic"><use href="#i-new"/></svg>
        <svg class="ic"><use href="#i-open"/></svg>
        <svg class="ic dim"><use href="#i-save"/></svg>
        <svg class="ic"><use href="#i-dots"/></svg>
        <svg class="ic"><use href="#i-back"/></svg>
        <svg class="ic dim nav-fwd"><use href="#i-fwd"/></svg>
        <svg class="ic hist"><use href="#i-history"/></svg>
      </div>
      <div class="insp-line">
        <div class="node-pick"><svg class="ic blue"><use href="#i-node"/></svg><span>Node2D</span><svg class="ic"><use href="#i-down"/></svg></div>
        <svg class="ic"><use href="#i-doc"/></svg>
      </div>
      <div class="insp-line second">
        <div class="lineedit filter-props"><span class="clip hint">Filter Properties</span><svg class="ic"><use href="#i-search"/></svg></div>
        <svg class="ic"><use href="#i-tools"/></svg>
      </div>
      <div class="insp-body">
        <div class="cat"><svg class="ic"><use href="#i-gear"/></svg>layout.gd</div>
        <div class="prop">
          <div class="prop-name"><span>Json File</span><svg class="ic"><use href="#i-reset"/></svg></div>
          <div class="prop-file"><span class="file-val">res://jso</span><span class="file-btn"><svg class="ic"><use href="#i-folder"/></svg></span></div>
        </div>
        <div class="prop">
          <div class="prop-name hl"><span>Auto Y O...</span><svg class="ic"><use href="#i-reset"/></svg></div>
          <div class="prop-val check"><span class="box"><svg viewBox="0 0 16 16"><path fill="none" stroke="#fff" stroke-width="2.600" d="m3 8 3.500 3.500L13 4.500"/></svg></span><span class="on">On</span></div>
        </div>
        <div class="prop">
          <div class="prop-name"><span>Y Offset</span><svg class="ic"><use href="#i-reset"/></svg></div>
          <div class="prop-val num">1080</div>
        </div>
        <div class="prop last">
          <div class="prop-name"><span>X Offset</span></div>
          <div class="prop-val num">0</div>
        </div>
        <div class="cat"><svg class="ic blue"><use href="#i-node"/></svg>Node2D</div>
        <div class="sub"><svg class="ic"><use href="#i-right"/></svg>Transform</div>
        <div class="cat"><svg class="ic dim"><use href="#i-brush"/></svg>CanvasItem</div>
        <div class="sub"><svg class="ic"><use href="#i-right"/></svg>Visibility</div>
        <div class="sub"><svg class="ic"><use href="#i-right"/></svg>Ordering</div>
        <div class="sub"><svg class="ic"><use href="#i-right"/></svg>Texture</div>
        <div class="sub"><svg class="ic"><use href="#i-right"/></svg>Material</div>
        <div class="cat"><svg class="ic"><use href="#i-node"/></svg>Node</div>
        <div class="sub"><svg class="ic"><use href="#i-right"/></svg>Process</div>
        <div class="sub"><svg class="ic"><use href="#i-right"/></svg>Editor Description</div>
        <div class="prop p-script">
          <div class="prop-name"><span>Script</span><svg class="ic"><use href="#i-reset"/></svg></div>
          <div class="script-val"><svg class="ic"><use href="#i-gear"/></svg><span>layout</span><svg class="ic script-down"><use href="#i-down"/></svg></div>
        </div>
        <div class="add-meta"><svg class="ic"><use href="#i-plus"/></svg><span>Add Metadata</span></div>
      </div>
    </section>
  </main>
</body>
</html>
```

FILE: styles.css
```css
* {
  box-sizing: border-box;
}
body {
  margin: 0;
  width: 2129px;
  height: 1268px;
  overflow: hidden;
  background: #1c2027;
  color: #c8cacd;
  font-family: "Noto Sans", sans-serif;
  font-size: 21px;
  line-height: 1;
}
.defs {
  position: absolute;
  width: 0;
  height: 0;
}
.ic {
  width: 24px;
  height: 24px;
  flex: none;
  fill: currentColor;
  color: #e0e0e0;
}
.ic.dim,
.dim .ic {
  color: #75787d;
}
.ic.blue {
  color: #8da5f3;
}
.tn {
  font-family: "Liberation Sans", sans-serif;
  font-weight: 700;
  text-anchor: middle;
  fill: #000;
}

/* window title */
.titlebar {
  height: 52px;
  display: flex;
  align-items: center;
  background: #000;
  border-top: 1px solid #2b2b2b;
  padding-left: 14px;
  color: #fff;
}
.logo {
  width: 25px;
  height: 25px;
}
.window-title {
  margin-left: 7px;
  font-size: 19.800px;
  padding-top: 1px;
}
.window-btns {
  margin-left: auto;
  display: flex;
  align-items: center;
  padding-right: 34px;
}
.win-min {
  width: 15px;
  height: 1px;
  background: #fff;
}
.win-max {
  width: 15px;
  height: 15px;
  border: 1px solid #fff;
  margin-left: 67px;
}
.win-close {
  width: 15px;
  height: 15px;
  margin-left: 66px;
}

/* menu */
.menubar {
  height: 67px;
  display: flex;
  align-items: center;
  padding-left: 18px;
  padding-bottom: 4px;
}
.menus {
  display: flex;
  gap: 24.500px;
  width: 807px;
  color: #c3c5c8;
  padding-bottom: 4px;
}
.workspaces {
  display: flex;
  gap: 24px;
  width: 807px;
  font-size: 22px;
  font-weight: 700;
  color: #c6c8cb;
  padding-bottom: 1px;
}
.ws {
  display: flex;
  align-items: center;
  gap: 6px;
}
.ws-on,
.ws-on .ic {
  color: #62b0f5;
}
.runbar {
  width: 340px;
  height: 47px;
  display: flex;
  align-items: center;
  gap: 24px;
  padding-left: 14px;
  background: #262b34;
  border-radius: 4px;
}
.renderer {
  display: flex;
  align-items: center;
  gap: 6px;
  margin-left: 16px;
  color: #618f38;
  font-weight: 700;
}
.renderer .ic {
  color: #618f38;
}

/* main layout */
.main {
  height: 1149px;
  display: flex;
  gap: 12px;
  padding-left: 9px;
}
.dock-left {
  width: 411px;
  display: flex;
  flex-direction: column;
  gap: 12px;
}
.panel {
  background: #363d4a;
  border-radius: 4px;
  position: relative;
}
.scene-panel {
  height: 564px;
}
.fs-panel {
  height: 563px;
}
.tabs {
  height: 43px;
  display: flex;
  align-items: center;
  background: #262c36;
  border-radius: 4px 4px 0 0;
  position: relative;
  color: #7f8389;
}
.tab {
  height: 43px;
  display: flex;
  align-items: center;
  padding: 0 16px;
}
.tab.on {
  background: #363d4a;
  border-top: 3px solid #568fc2;
  padding-bottom: 3px;
  color: #c8cacd;
}
.scene-panel .tab.on {
  width: 92px;
}
.tab-dots {
  margin-left: auto;
  margin-right: 1px;
  color: #777b81;
}
.lineedit {
  display: flex;
  align-items: center;
  height: 44px;
  background: #262b34;
  border-bottom: 3px solid #1c1f25;
  border-radius: 3px 3px 0 0;
  padding: 3px 9px 0;
}
.clip {
  flex: 1;
  min-width: 0;
  white-space: nowrap;
  color: #a4a7ab;
}
.hint {
  color: #9a9da2;
}

/* scene dock */
.scene-tools {
  height: 58px;
  display: flex;
  align-items: center;
  gap: 24px;
  padding-left: 15px;
}
.filter-scene {
  width: 207px;
  margin: 0 -9px;
}
.filter-scene .ic {
  margin-top: -3px;
}
.tree {
  background: #21252d;
  border-radius: 4px;
  margin: 0 6px;
  position: relative;
  overflow: hidden;
}
.scene-tree {
  height: 457px;
  padding-top: 7px;
}
.scene-tree::before {
  content: "";
  position: absolute;
  left: 15px;
  top: 50px;
  bottom: 0;
  width: 2px;
  background: #4b5059;
}
.row {
  height: 43px;
  display: flex;
  align-items: center;
  position: relative;
}
.chev {
  width: 21px;
  height: 21px;
  margin-left: 4px;
  margin-right: -1px;
  color: #6f7378;
}
.sel {
  display: flex;
  align-items: center;
  height: 43px;
  background: #37506a;
  border: 1px solid #62798f;
  border-radius: 3px;
  color: #e8eaec;
}
.sel-root {
  width: 284px;
  padding-left: 7px;
  gap: 7px;
}
.attached {
  color: #5a9bd8;
  margin-left: 6px;
}
.eye {
  position: absolute;
  left: 350px;
  top: 9px;
}
.leaf {
  padding-left: 48px;
  gap: 10px;
}
.leaf::before,
.file::before {
  content: "";
  position: absolute;
  height: 2px;
  background: #4b5059;
  top: 21px;
}
.leaf::before {
  left: 15px;
  width: 27px;
}
.scene-thumb {
  position: absolute;
  right: 5px;
  top: 6px;
  width: 9px;
  height: 424px;
  background: #6c7077;
  border-radius: 5px;
}

/* filesystem dock */
.fs-path {
  height: 59px;
  display: flex;
  align-items: center;
  padding: 3px 0 0 9px;
  gap: 5px;
}
.path-edit {
  width: 297px;
  margin-right: 3px;
  padding-left: 8px;
  color: #c8cacd;
}
.swatch {
  width: 24px;
  height: 24px;
  background: #e0e0e0;
}
.fs-filter {
  display: flex;
  align-items: center;
  padding-left: 6px;
  height: 44px;
  margin-bottom: 6px;
  gap: 9px;
}
.filter-files {
  width: 357px;
}
.filter-files .ic {
  margin-top: -3px;
}
.fs-tree {
  height: 406px;
  padding-top: 8px;
}
.fs-tree::before {
  content: "";
  position: absolute;
  left: 15px;
  top: 72px;
  bottom: 5px;
  width: 2px;
  background: #3a404a;
}
.fs-tree::after {
  content: "";
  position: absolute;
  left: 33px;
  top: 115px;
  bottom: 0;
  width: 2px;
  background: #414750;
}
.fs-res {
  padding-left: 0;
}
.fs-dir {
  padding-left: 18px;
}
.fs-res .chev,
.fs-dir .chev {
  margin-right: 5px;
}
.fs-res span,
.fs-dir span {
  margin-left: 9px;
}
.folder {
  color: #85b5df;
}
.file {
  padding-left: 66px;
  gap: 9px;
}
.file::before {
  left: 34px;
  width: 26px;
  background: #3d434d;
}
.fs-dir::before,
.file.first-file::before {
  content: "";
  position: absolute;
  border-left: 3px solid #9a9da2;
  border-bottom: 3px solid #9a9da2;
  background: none;
}
.fs-dir::before {
  left: 13px;
  top: -1px;
  width: 11px;
  height: 24px;
}
.file.first-file::before {
  left: 31px;
  top: -1px;
  width: 29px;
  height: 24px;
}
.sel-file {
  width: 320px;
  margin-left: -6px;
  padding-left: 6px;
  gap: 9px;
}
.fs-track {
  position: absolute;
  right: 5px;
  top: 6px;
  bottom: 7px;
  width: 7px;
  background: #2b2f38;
  border-radius: 4px;
}
.fs-thumb {
  position: absolute;
  right: 4px;
  top: 25px;
  width: 9px;
  height: 206px;
  background: #6c7077;
  border-radius: 5px;
}

/* centre */
.center {
  width: 1352px;
  display: flex;
  flex-direction: column;
}
.center-tabs {
  flex: none;
}
.scene-tab {
  width: 211px;
  padding-left: 16px;
  gap: 7px;
}
.close {
  transform: rotate(45deg);
  margin-left: 7px;
}
.add-tab {
  margin-left: 15px;
  color: #6f747b;
}
.full {
  margin-left: auto;
  margin-right: 9px;
}
.toolbar {
  height: 58px;
  display: flex;
  align-items: center;
  background: #363d4a;
  padding-left: 5px;
}
.tool {
  width: 48px;
  height: 45px;
  flex: none;
  display: flex;
  align-items: center;
  justify-content: center;
}
.tool-on {
  width: 43px;
  margin-right: 3.500px;
  background: #21252d;
  border-radius: 4px;
}
.tool-on .ic {
  color: #62b0f5;
}
.cam .ic {
  color: #54638f;
}
.sep {
  width: 1px;
  height: 45px;
  flex: none;
  background: #4c5360;
  margin: 0 4.500px;
}
.view {
  width: 46px;
  margin: 0 12px;
  color: #c8cacd;
}
.viewport {
  height: 965px;
  position: relative;
  background: #4d4d4d;
  flex: none;
}
.viewport::after {
  content: "";
  position: absolute;
  inset: 0;
  border: 3px solid #5587b2;
  pointer-events: none;
}
.canvas {
  display: block;
}
.scene-frame {
  fill: none;
  stroke: #686868;
}
.axis-y-top {
  stroke: #85ad00;
}
.axis-y {
  stroke: #7ea37a;
}
.axis-x-left {
  stroke: #d3343f;
}
.axis-x {
  stroke: #a83c85;
  stroke-opacity: .8;
}
.shape {
  fill: #fff;
  stroke: #000;
  stroke-width: 3.400;
  stroke-linejoin: round;
}
.thin {
  stroke-width: 3;
}
.digit {
  font-family: "Liberation Sans", sans-serif;
  font-weight: 700;
  font-size: 30px;
  text-anchor: middle;
  fill: #000;
  stroke: #000;
  stroke-width: 1.200;
}
.tight {
  letter-spacing: -3px;
}
.origin-back {
  fill: #d9b5b3;
}
.origin-dot {
  fill: #ff7a72;
}
.ruler {
  fill: #1c2129;
}
.ruler-corner {
  fill: #7b7b7b;
}
.tick {
  stroke: #8d9095;
  stroke-width: 1;
  fill: none;
}
.ruler-num {
  font-size: 13px;
  fill: #a6a8ac;
}
.bar-track {
  fill: #5b5b5b;
}
.bar-grab {
  fill: #8c8c8c;
}
.zoom {
  position: absolute;
  left: 37px;
  top: 36px;
  display: flex;
  align-items: center;
  height: 24px;
}
.zbtn {
  margin-left: 24px;
}
.zoom-val {
  color: #fff;
  margin-left: 19px;
  margin-right: -6px;
}
.bottom {
  height: 61px;
  flex: none;
  margin-top: 13px;
  display: flex;
  align-items: center;
  gap: 24px;
  background: #363d4a;
  border-radius: 4px;
  padding: 5px 0 0 16px;
}
.warn-dot {
  width: 11px;
  height: 11px;
  border-radius: 50%;
  background: #ffdd65;
  margin-right: -17px;
  margin-top: -3px;
}
.version {
  margin-left: auto;
  display: flex;
  align-items: center;
  gap: 9px;
  padding-right: 11px;
  color: #7f838a;
  position: relative;
  top: -4px;
}
.mini {
  color: #4c535e;
}

/* inspector */
.dock-right {
  width: 324px;
  height: 1139px;
}
.insp-tab {
  width: 128px;
}
.arrows {
  position: absolute;
  left: 256px;
  top: 12px;
  width: 44px;
  height: 20px;
}
.right-dots {
  position: absolute;
  right: 0;
  top: 10px;
  margin: 0;
}
.insp-tools {
  height: 54px;
  display: flex;
  align-items: center;
  gap: 24px;
  padding: 0 15px;
}
.nav-fwd {
  margin-left: -12px;
}
.hist {
  margin-left: -6px;
}
.insp-line {
  display: flex;
  align-items: center;
  height: 46px;
  padding-left: 6px;
  gap: 15px;
}
.insp-line.second {
  height: 44px;
  margin-top: 6px;
}
.node-pick {
  width: 264px;
  height: 46px;
  display: flex;
  align-items: center;
  background: #21252d;
  border-radius: 4px;
  padding: 0 5px 2px;
  gap: 13px;
}
.node-pick span {
  flex: 1;
}
.filter-props {
  width: 264px;
}
.filter-props .ic {
  margin-top: -3px;
}
.insp-body {
  margin: 6px 6px 0;
  height: 940px;
  background: #21252d;
  border-radius: 4px;
  padding: 6px;
}
.cat {
  height: 37px;
  display: flex;
  align-items: center;
  justify-content: center;
  gap: 10px;
  background: #3e424b;
  border-radius: 4px;
  padding-bottom: 2px;
  font-weight: 700;
  color: #c5c7ca;
}
.sub {
  height: 37px;
  display: flex;
  align-items: center;
  background: #292d36;
  padding-bottom: 2px;
  font-weight: 700;
  color: #c5c7ca;
}
.sub .ic {
  color: #7d8086;
  width: 21px;
}
.prop {
  height: 44px;
  display: flex;
  margin-bottom: 6px;
  color: #9fa2a7;
}
.prop.last {
  height: 43px;
  margin-bottom: 0;
}
.prop-name {
  width: 150px;
  display: flex;
  align-items: center;
  padding: 0 0 3px 12px;
  flex: none;
}
.prop-name span {
  flex: 1;
  white-space: nowrap;
}
.prop-name .ic {
  margin-right: 4px;
}
.hl {
  background: #37506a;
  border-radius: 4px 0 0 4px;
}
.prop-file {
  flex: 1;
  display: flex;
  gap: 6px;
  color: #c8cacd;
}
.file-val {
  width: 102px;
  height: 41px;
  display: flex;
  align-items: center;
  padding-left: 9px;
  background: #262b34;
}
.file-btn {
  width: 42px;
  height: 43px;
  display: flex;
  align-items: center;
  justify-content: center;
  background: #262b34;
  border-radius: 3px;
}
.prop-val {
  flex: 1;
  display: flex;
  align-items: center;
  background: #1b1e25;
  border-radius: 0 4px 4px 0;
  padding-bottom: 3px;
  color: #c8cacd;
}
.num {
  padding-left: 25px;
}
.check {
  padding-left: 7px;
  gap: 14px;
}
.box {
  width: 21px;
  height: 21px;
  background: #62b0f5;
  border-radius: 3px;
  display: flex;
}
.on {
  color: #62b0f5;
}
.p-script {
  height: 42px;
  margin-bottom: 10px;
}
.p-script .prop-name {
  padding-bottom: 1px;
}
.script-val {
  flex: 1;
  display: flex;
  align-items: center;
  gap: 6px;
  padding: 3px 0 0 9px;
  color: #c8cacd;
}
.script-val span {
  flex: 1;
}
.script-down {
  width: 18px;
  height: 18px;
  margin-right: 11px;
  color: #a4a7ab;
}
.add-meta {
  width: 269px;
  height: 46px;
  margin-left: 15px;
  display: flex;
  align-items: center;
  background: #30343e;
  border-radius: 4px;
  padding: 0 0 0 9px;
  color: #c8cacd;
}
.add-meta span {
  flex: 1;
  text-align: center;
}
```
